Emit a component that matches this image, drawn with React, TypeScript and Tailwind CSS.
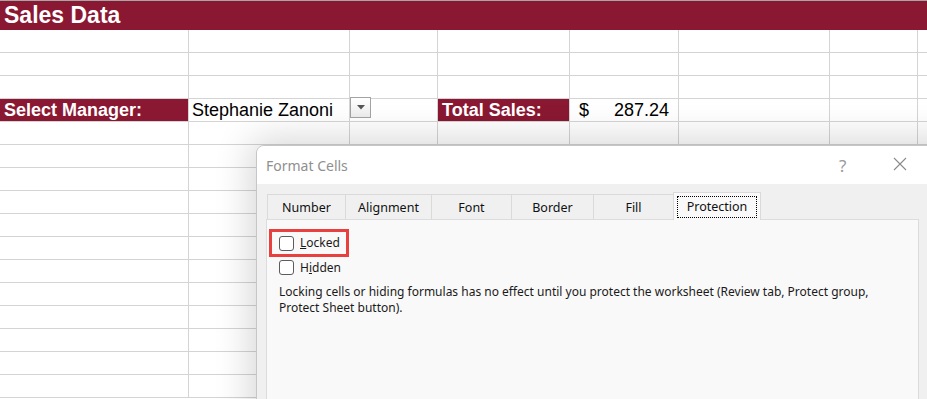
import type { ReactNode } from 'react';

const colWidths = ['w-[189px]', 'w-[161px]', 'w-[88px]', 'w-[132px]', 'w-[109px]', 'w-[151px]', 'w-[88px]'];

function SheetRow({ cells = {} }: { cells?: Record<number, ReactNode> }) {
  return (
    <div className="flex h-[23px] border-b border-[#d4d4d4]">
      {colWidths.map((w, i) => (
        <div key={i} className={`${w} shrink-0 h-full border-r border-[#d4d4d4]`}>
          {cells[i]}
        </div>
      ))}
      <div className="flex-1" />
    </div>
  );
}

function Checkbox() {
  return <span className="w-[15px] h-[15px] shrink-0 rounded-[3px] border border-[#5c5c5c] bg-white" />;
}

function FormatCellsDialog() {
  const tabs = [
    { label: 'Number', w: 'w-[78px]' },
    { label: 'Alignment', w: 'w-[86px]' },
    { label: 'Font', w: 'w-[80px]' },
    { label: 'Border', w: 'w-[82px]' },
    { label: 'Fill', w: 'w-[80px]' },
  ];

  return (
    <div className="absolute left-[256px] top-[145px] w-[720px] h-[320px] rounded-lg border border-[#c6c6c6] bg-[#f0f0f0] shadow-[0_0_36px_6px_rgba(0,0,0,0.16)] overflow-hidden font-['Noto_Sans',sans-serif]">
      <div className="h-[38px] bg-white flex items-center pl-[9px] relative">
        <span className="text-[14px] text-[#8f8f8f]">Format Cells</span>
        <span className="absolute left-[582px] top-[7px] text-[17px] text-[#9a9a9a]">?</span>
        <svg className="absolute left-[636px] top-[11px]" width="14" height="14" viewBox="0 0 14 14">
          <path d="M1 1 L13 13 M13 1 L1 13" stroke="#8a8a8a" strokeWidth="1.1" fill="none" />
        </svg>
      </div>

      <div className="pt-[8px]">
        <div className="flex items-end h-[27px] ml-[10px]">
          {tabs.map((t) => (
            <div
              key={t.label}
              className={`${t.w} h-[25px] border-l border-t border-[#dadada] flex items-center justify-center pt-[2px] text-[12.5px] text-[#111]`}
            >
              {t.label}
            </div>
          ))}
          <div className="w-[88px] h-[28px] -mb-px relative z-10 border-l border-t border-r border-[#dadada] bg-[#f9f9f9] pt-[3px] px-[3px]">
            <div className="h-[22px] border border-dotted border-black flex items-center justify-center text-[12.5px] text-[#111]">
              Protection
            </div>
          </div>
        </div>

        <div className="ml-[9px] w-[653px] h-[200px] border border-[#dcdcdc] bg-[#f9f9f9] pt-[9px] text-[12px] text-[#1a1a1a]">
          <div className="ml-[2px] w-[80px] h-[28px] border-[3px] border-[#e8403f] flex items-center gap-[6px] pl-[7px]">
            <Checkbox />
            <span>
              <span className="underline">L</span>ocked
            </span>
          </div>
          <div className="flex items-center gap-[6px] pl-[12px] pt-[2px] h-[19px]">
            <Checkbox />
            <span>
              H<span className="underline">i</span>dden
            </span>
          </div>
          <p className="pl-[12px] mt-[8px] leading-[16px] whitespace-nowrap">
            Locking cells or hiding formulas has no effect until you protect the worksheet (Review tab, Protect group,
            <br />
            Protect Sheet button).
          </p>
        </div>
      </div>
    </div>
  );
}

export default function App() {
  const emptyRows = Array.from({ length: 12 });

  return (
    <div className="relative w-[927px] h-[399px] overflow-hidden bg-white font-['Liberation_Sans',Arial,sans-serif]">
      <div className="h-[30px] border-t border-[#a6a6a6] bg-[#8a1832] flex items-center pl-[4px]">
        <span className="text-[23px] font-bold text-white leading-none">Sales Data</span>
      </div>

      <SheetRow />
      <SheetRow />
      <SheetRow />
      <SheetRow
        cells={{
          0: (
            <div className="h-full bg-[#8a1832] flex items-center pl-[4px] text-[18px] font-bold text-white">
              Select Manager:
            </div>
          ),
          1: <div className="h-full flex items-center pl-[3px] text-[18px] text-black">Stephanie Zanoni</div>,
          2: (
            <div className="h-full flex items-start">
              <div className="w-[21px] h-[21px] -mt-[2px] border border-[#a3a3a3] bg-gradient-to-b from-white to-[#ececec] flex items-center justify-center">
                <svg width="8" height="5" viewBox="0 0 8 5">
                  <path d="M0 0 H8 L4 4.5 Z" fill="#555" />
                </svg>
              </div>
            </div>
          ),
          3: (
            <div className="h-full bg-[#8a1832] flex items-center pl-[4px] text-[18px] font-bold text-white">
              Total Sales:
            </div>
          ),
          4: (
            <div className="h-full flex items-center justify-between pl-[9px] pr-[9px] text-[18px] text-black">
              <span>$</span>
              <span>287.24</span>
            </div>
          ),
        }}
      />
      {emptyRows.map((_, i) => (
        <SheetRow key={i} />
      ))}

      <FormatCellsDialog />
    </div>
  );
}
